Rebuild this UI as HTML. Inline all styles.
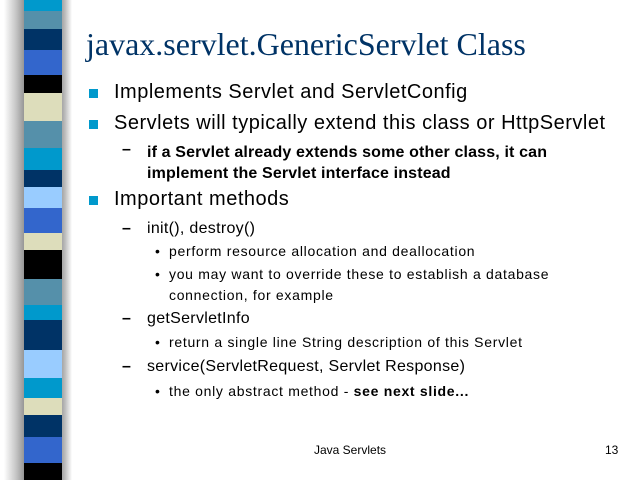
<!DOCTYPE html><html><head><style>
body{margin:0;width:640px;height:480px;background:#fff;position:relative;overflow:hidden;font-family:"Liberation Sans",Arial,sans-serif;color:#000}
.sh{position:absolute;top:0;height:480px}
.s{position:absolute;left:24px;width:38px}
.t{position:absolute;white-space:nowrap;line-height:1}
.l1{font-size:20px;letter-spacing:0.5px;left:114px}
.l3{font-size:14px;letter-spacing:0.7px;left:169px}
.d{position:absolute;left:155px;font-size:14px;line-height:1}
.b{position:absolute;left:89px;width:9px;height:9px;background:#0099cc}
</style></head><body>
<div class="sh" style="left:0;width:26px;background:linear-gradient(to right,#fff,#fff 15%,#c8c8c8 60%,#8a8a8a)"></div>
<div class="sh" style="left:58px;width:14px;background:linear-gradient(to right,#8a8a8a,#bbb 50%,#fff)"></div>
<div class="s" style="top:0;height:11px;background:#0099cc"></div>
<div class="s" style="top:11px;height:18px;background:#5590aa"></div>
<div class="s" style="top:29px;height:21px;background:#003366"></div>
<div class="s" style="top:50px;height:25px;background:#3366cc"></div>
<div class="s" style="top:75px;height:18px;background:#000"></div>
<div class="s" style="top:93px;height:28px;background:#ddddbb"></div>
<div class="s" style="top:121px;height:27px;background:#5590aa"></div>
<div class="s" style="top:148px;height:22px;background:#0099cc"></div>
<div class="s" style="top:170px;height:17px;background:#003366"></div>
<div class="s" style="top:187px;height:21px;background:#99ccff"></div>
<div class="s" style="top:208px;height:25px;background:#3366cc"></div>
<div class="s" style="top:233px;height:17px;background:#ddddbb"></div>
<div class="s" style="top:250px;height:29px;background:#000"></div>
<div class="s" style="top:279px;height:26px;background:#5590aa"></div>
<div class="s" style="top:305px;height:15px;background:#0099cc"></div>
<div class="s" style="top:320px;height:30px;background:#003366"></div>
<div class="s" style="top:350px;height:28px;background:#99ccff"></div>
<div class="s" style="top:378px;height:20px;background:#0099cc"></div>
<div class="s" style="top:398px;height:17px;background:#ddddbb"></div>
<div class="s" style="top:415px;height:22px;background:#003366"></div>
<div class="s" style="top:437px;height:26px;background:#3366cc"></div>
<div class="s" style="top:463px;height:17px;background:#000"></div>

<div class="t" style="left:86px;top:28px;font-family:'Liberation Serif',serif;font-size:32px;color:#003366">javax.servlet.GenericServlet Class</div>

<div class="b" style="top:89px"></div><div class="t l1" style="top:82px">Implements Servlet and ServletConfig</div>
<div class="b" style="top:120px"></div><div class="t l1" style="top:113px">Servlets will typically extend this class or HttpServlet</div>
<div class="t" style="left:122px;top:142px;font-size:16px;font-weight:bold">–</div>
<div class="t" style="left:147px;top:142px;font-size:16px;font-weight:bold;letter-spacing:0.15px;line-height:21px">if a Servlet already extends some other class, it can<br>implement the Servlet interface instead</div>
<div class="b" style="top:196px"></div><div class="t l1" style="top:189px">Important methods</div>
<div class="t" style="left:122px;top:221px;font-size:16px;font-weight:bold">–</div><div class="t" style="left:147px;top:221px;font-size:16px;letter-spacing:0.3px">init(), destroy()</div>
<div class="d" style="top:244px">•</div><div class="t l3" style="top:244px">perform resource allocation and deallocation</div>
<div class="d" style="top:267px">•</div><div class="t l3" style="top:267px">you may want to override these to establish a database</div>
<div class="t l3" style="top:288px">connection, for example</div>
<div class="t" style="left:122px;top:311px;font-size:16px;font-weight:bold">–</div><div class="t" style="left:147px;top:311px;font-size:16px;letter-spacing:0.3px">getServletInfo</div>
<div class="d" style="top:335px">•</div><div class="t l3" style="top:335px">return a single line String description of this Servlet</div>
<div class="t" style="left:122px;top:359px;font-size:16px;font-weight:bold">–</div><div class="t" style="left:147px;top:359px;font-size:16px;letter-spacing:0.3px">service(ServletRequest, Servlet Response)</div>
<div class="d" style="top:384px">•</div><div class="t l3" style="top:384px">the only abstract method - <b>see next slide...</b></div>

<div class="t" style="left:314px;top:444px;font-size:12px">Java Servlets</div>
<div class="t" style="left:605px;top:444px;font-size:12px">13</div>
</body></html>
